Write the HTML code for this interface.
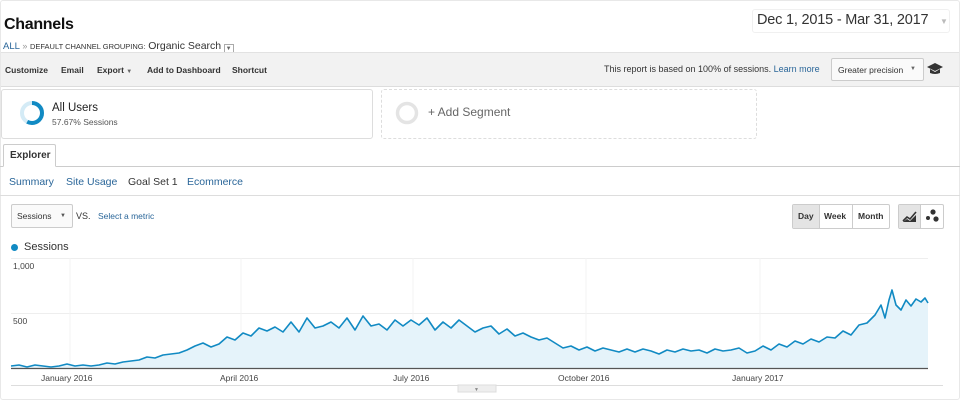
<!DOCTYPE html>
<html><head><meta charset="utf-8"><style>
*{box-sizing:border-box;margin:0;padding:0}
body{width:960px;height:400px;background:#fff;font-family:"Liberation Sans",Arial,sans-serif;color:#222;position:relative;overflow:hidden}
.abs{position:absolute;white-space:nowrap}
.frame{position:absolute;left:0;top:0;width:960px;height:400px;border:1px solid #e8e8e8;border-radius:3px}
.tb{font-size:8.5px;font-weight:bold;color:#333;top:65px}
.link{color:#2a6699}
.btn{border:1px solid #ccc;border-radius:2px;background:#fff}
</style></head><body>
<div class="frame"></div>
<div class="abs" style="left:4px;top:16px;font-size:16px;font-weight:bold;color:#111;letter-spacing:-0.3px">Channels</div>
<div class="abs" style="left:3px;top:40px;font-size:9px;color:#333"><span class="link" style="font-size:9.5px">ALL</span> <span style="color:#999">»</span> <span style="font-size:7.5px">DEFAULT CHANNEL GROUPING:</span> <span style="font-size:10.5px">Organic Search</span> <span style="display:inline-block;width:10px;height:10px;border:1px solid #aaa;vertical-align:-1px;font-size:6px;text-align:center;line-height:8px;color:#666">▼</span></div>
<div class="abs" style="left:752px;top:9px;width:198px;height:24px;background:#fff;border:1px solid #f0f0f0;border-radius:3px"></div>
<div class="abs" style="left:757px;top:12px;font-size:14.5px;color:#333;letter-spacing:-0.2px">Dec 1, 2015 - Mar 31, 2017</div>
<div class="abs" style="left:940px;top:17px;font-size:8px;color:#bbb">▼</div>

<div class="abs" style="left:1px;top:52px;width:958px;height:35px;background:#f2f2f2;border-top:1px solid #e2e2e2;border-bottom:1px solid #ddd"></div>
<div class="abs tb" style="left:5px">Customize</div>
<div class="abs tb" style="left:61px">Email</div>
<div class="abs tb" style="left:97px">Export <span style="font-size:6px;color:#666">▼</span></div>
<div class="abs tb" style="left:147px">Add to Dashboard</div>
<div class="abs tb" style="left:232px">Shortcut</div>
<div class="abs" style="left:604px;top:64px;font-size:9px;color:#333">This report is based on 100% of sessions. <span class="link">Learn more</span></div>
<div class="abs btn" style="left:831px;top:58px;width:93px;height:23px;border-color:#ccc;background:#fafafa"></div>
<div class="abs" style="left:838px;top:65px;font-size:8.5px;color:#333">Greater precision</div>
<div class="abs" style="left:910px;top:66px;font-size:6px;color:#666">▼</div>
<svg class="abs" style="left:926px;top:63px" width="18" height="12" viewBox="0 0 18 12"><path d="M1 4 L9 0 L17 4 L9 8 Z" fill="#333"/><path d="M4 6 L4 10 Q9 12 14 10 L14 6 L9 9 Z" fill="#333"/></svg>

<div class="abs" style="left:1px;top:89px;width:372px;height:50px;border:1px solid #ddd;border-radius:3px"></div>
<svg class="abs" style="left:19px;top:100px" width="26" height="26" viewBox="0 0 26 26"><circle cx="13" cy="13" r="10" fill="none" stroke="#d4ebf6" stroke-width="4"/><circle cx="13" cy="13" r="10" fill="none" stroke="#118ac3" stroke-width="4" stroke-dasharray="36.2 62.8" transform="rotate(-90 13 13)"/></svg>
<div class="abs" style="left:52px;top:102px;font-size:11.5px;color:#222">All Users</div>
<div class="abs" style="left:52px;top:117px;font-size:8.5px;color:#555">57.67% Sessions</div>
<div class="abs" style="left:381px;top:89px;width:376px;height:50px;border:1px dashed #ddd;border-radius:3px"></div>
<svg class="abs" style="left:395px;top:101px" width="24" height="24" viewBox="0 0 24 24"><circle cx="12" cy="12" r="9.5" fill="none" stroke="#e4e4e4" stroke-width="3.5"/></svg>
<div class="abs" style="left:428px;top:105px;font-size:12px;color:#666">+ Add Segment</div>

<div class="abs" style="left:0;top:166px;width:960px;height:1px;background:#ccc"></div>
<div class="abs" style="left:3px;top:144px;width:53px;height:23px;border:1px solid #ccc;border-bottom:1px solid #fff;background:#fff;border-radius:2px 2px 0 0"></div>
<div class="abs" style="left:10px;top:150px;font-size:10px;font-weight:bold;color:#333">Explorer</div>
<div class="abs" style="left:9px;top:176px;font-size:10.5px;color:#2a6699">Summary</div>
<div class="abs" style="left:66px;top:176px;font-size:10.5px;color:#2a6699">Site Usage</div>
<div class="abs" style="left:128px;top:176px;font-size:10.5px;color:#333">Goal Set 1</div>
<div class="abs" style="left:187px;top:176px;font-size:10.5px;color:#2a6699">Ecommerce</div>
<div class="abs" style="left:0;top:195px;width:960px;height:1px;background:#ddd"></div>

<div class="abs btn" style="left:11px;top:204px;width:62px;height:24px;background:#fafafa"></div>
<div class="abs" style="left:17px;top:211px;font-size:8.5px;color:#333">Sessions</div>
<div class="abs" style="left:60px;top:213px;font-size:6px;color:#555">▼</div>
<div class="abs" style="left:76px;top:211px;font-size:9px;color:#333">VS.</div>
<div class="abs" style="left:98px;top:211px;font-size:8.5px;color:#2a6699">Select a metric</div>

<div class="abs btn" style="left:792px;top:204px;width:98px;height:25px"></div>
<div class="abs" style="left:793px;top:205px;width:26px;height:23px;background:#e4e4e4"></div>
<div class="abs" style="left:819px;top:205px;width:1px;height:23px;background:#ccc"></div>
<div class="abs" style="left:852px;top:205px;width:1px;height:23px;background:#ccc"></div>
<div class="abs" style="left:798px;top:211px;font-size:8.5px;font-weight:bold;color:#333">Day</div>
<div class="abs" style="left:824px;top:211px;font-size:8.5px;font-weight:bold;color:#333">Week</div>
<div class="abs" style="left:858px;top:211px;font-size:8.5px;font-weight:bold;color:#333">Month</div>
<div class="abs btn" style="left:898px;top:204px;width:46px;height:25px"></div>
<div class="abs" style="left:899px;top:205px;width:22px;height:23px;background:#e4e4e4;border-right:1px solid #ccc"></div>
<svg class="abs" style="left:902px;top:209px" width="16" height="14" viewBox="0 0 16 14"><path d="M1 12 L5 8 L8 10 L14 3" fill="none" stroke="#333" stroke-width="1.6"/><path d="M1 13 L5 10 L8 12 L14 6 L14 13 Z" fill="#333"/></svg>
<svg class="abs" style="left:924px;top:207px" width="18" height="18" viewBox="0 0 18 18"><circle cx="9" cy="5" r="2.6" fill="#333"/><circle cx="4" cy="11" r="2" fill="#333"/><circle cx="12" cy="12" r="2.6" fill="#333"/></svg>

<div class="abs" style="left:11px;top:244px;width:7px;height:7px;border-radius:50%;background:#118ac3"></div>
<div class="abs" style="left:24px;top:241px;font-size:11px;color:#333">Sessions</div>

<svg class="abs" style="left:0;top:250px" width="960" height="150" viewBox="0 250 960 150">
<line x1="11" y1="258.5" x2="928" y2="258.5" stroke="#eee"/>
<line x1="11" y1="313.5" x2="928" y2="313.5" stroke="#eee"/>
<g stroke="#f3f3f3"><line x1="70" y1="258" x2="70" y2="368"/><line x1="241" y1="258" x2="241" y2="368"/><line x1="413" y1="258" x2="413" y2="368"/><line x1="586" y1="258" x2="586" y2="368"/><line x1="760" y1="258" x2="760" y2="368"/></g>
<polygon fill="#e5f3fa" points="11,368 11,366 19,365 27,367 35,365 43,366 51,367 59,366 67,364 75,366 83,365 91,366 99,365 107,363 115,364 123,362 131,361 139,360 147,357 155,358 163,355 171,354 179,353 187,350 195,346 203,343 211,347 219,344 227,337 235,340 243,333 251,336 259,328 267,331 275,327 283,332 291,322 299,332 307,318 315,328 323,326 331,322 339,328 347,318 355,330 363,316 371,326 379,324 387,330 395,320 403,326 411,320 419,325 427,318 435,330 443,322 451,328 459,320 467,326 475,332 483,328 491,326 499,334 507,329 515,336 523,333 531,337 539,340 547,338 555,343 563,348 571,346 579,350 587,347 595,351 603,348 611,350 619,352 627,349 635,352 643,349 651,351 659,354 667,350 675,352 683,349 691,351 699,350 707,353 715,349 723,351 731,350 739,348 747,353 755,351 763,346 771,350 779,344 787,347 795,341 803,344 811,339 819,342 827,337 835,338 843,331 851,335 859,325 867,323 875,315 881,305 885,318 889,300 892,290 896,305 901,310 906,300 911,306 916,299 921,302 925,298 928,303 928,368"/>
<polyline fill="none" stroke="#118ac3" stroke-width="1.6" stroke-linejoin="round" points="11,366 19,365 27,367 35,365 43,366 51,367 59,366 67,364 75,366 83,365 91,366 99,365 107,363 115,364 123,362 131,361 139,360 147,357 155,358 163,355 171,354 179,353 187,350 195,346 203,343 211,347 219,344 227,337 235,340 243,333 251,336 259,328 267,331 275,327 283,332 291,322 299,332 307,318 315,328 323,326 331,322 339,328 347,318 355,330 363,316 371,326 379,324 387,330 395,320 403,326 411,320 419,325 427,318 435,330 443,322 451,328 459,320 467,326 475,332 483,328 491,326 499,334 507,329 515,336 523,333 531,337 539,340 547,338 555,343 563,348 571,346 579,350 587,347 595,351 603,348 611,350 619,352 627,349 635,352 643,349 651,351 659,354 667,350 675,352 683,349 691,351 699,350 707,353 715,349 723,351 731,350 739,348 747,353 755,351 763,346 771,350 779,344 787,347 795,341 803,344 811,339 819,342 827,337 835,338 843,331 851,335 859,325 867,323 875,315 881,305 885,318 889,300 892,290 896,305 901,310 906,300 911,306 916,299 921,302 925,298 928,303"/>
<line x1="11" y1="368.5" x2="928" y2="368.5" stroke="#555" stroke-width="1.2"/>
<line x1="11" y1="385.5" x2="943" y2="385.5" stroke="#ddd"/>
<rect x="458" y="385" width="38" height="7" fill="#eee" stroke="#ddd"/>
<text x="474" y="391" font-size="5" fill="#888" font-family="Liberation Sans">▼</text>
</svg>
<div class="abs" style="left:13px;top:261px;font-size:8.5px;color:#444">1,000</div>
<div class="abs" style="left:13px;top:316px;font-size:8.5px;color:#444">500</div>
<div class="abs" style="left:41px;top:373px;font-size:8.5px;color:#444">January 2016</div>
<div class="abs" style="left:220px;top:373px;font-size:8.5px;color:#444">April 2016</div>
<div class="abs" style="left:393px;top:373px;font-size:8.5px;color:#444">July 2016</div>
<div class="abs" style="left:558px;top:373px;font-size:8.5px;color:#444">October 2016</div>
<div class="abs" style="left:732px;top:373px;font-size:8.5px;color:#444">January 2017</div>
</body></html>
